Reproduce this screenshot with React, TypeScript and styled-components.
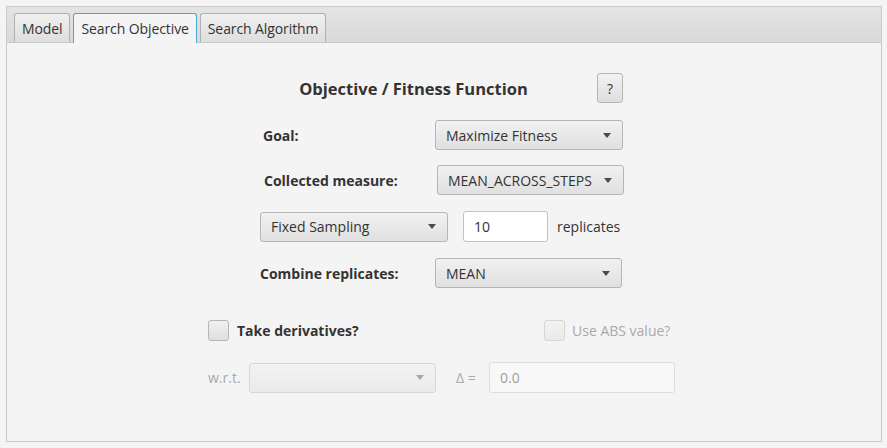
import React from "react";
import styled, { createGlobalStyle, css } from "styled-components";

const GlobalStyle = createGlobalStyle`
  html, body { margin: 0; padding: 0; background: #f4f4f4; }
  body {
    font-family: "Open Sans", "Noto Sans", "Liberation Sans", sans-serif;
    font-size: 14px;
    color: #333333;
  }
  * { box-sizing: border-box; }
`;

const Page = styled.div`
  width: 887px;
  height: 448px;
  padding: 6px 5px 6px 6px;
  display: flex;
`;

const TabPane = styled.div`
  flex: 1;
  display: flex;
  flex-direction: column;
`;

const TabHeader = styled.div`
  height: 36px;
  display: flex;
  align-items: flex-end;
  gap: 3px;
  padding-left: 7px;
  background: linear-gradient(#e4e4e4, #d9d9d9);
  border: 1px solid #c9c9c9;
  border-bottom: none;
`;

const Tab = styled.div<{ $active?: boolean }>`
  height: 29px;
  padding: 0 7px;
  display: flex;
  align-items: center;
  border-radius: 3px 3px 0 0;
  border: 1px solid #b0b0b0;
  border-bottom: none;
  background: linear-gradient(#f0f0f0, #dedede);
  color: #333;
  letter-spacing: -0.1px;
  ${(p) =>
    p.$active &&
    css`
      background: #f4f4f4;
      border-color: #45a8d8;
      position: relative;
      top: 1px;
      height: 30px;
    `}
`;

const Content = styled.div`
  flex: 1;
  background: #f4f4f4;
  border: 1px solid #c9c9c9;
  padding-left: 201px;
  display: flex;
  flex-direction: column;
`;

const Row = styled.div<{ $top: number; $left?: number }>`
  display: flex;
  align-items: center;
  margin-top: ${(p) => p.$top}px;
  margin-left: ${(p) => p.$left ?? 0}px;
`;

const Title = styled.div`
  width: 367px;
  text-align: center;
  font-weight: 700;
  font-size: 16.5px;
`;

const HelpButton = styled.div`
  width: 26px;
  height: 30px;
  border: 1px solid #b5b5b5;
  border-radius: 3px;
  background: linear-gradient(#f2f2f2, #dedede);
  display: flex;
  align-items: center;
  justify-content: center;
  font-size: 14px;
`;

const Label = styled.div<{ $width?: number; $disabled?: boolean; $bold?: boolean }>`
  width: ${(p) => (p.$width ? `${p.$width}px` : "auto")};
  font-weight: ${(p) => (p.$bold ? 700 : 400)};
  color: ${(p) => (p.$disabled ? "#a9a9a9" : "#333")};
  white-space: nowrap;
`;

const Combo = styled.div<{ $width: number; $disabled?: boolean }>`
  width: ${(p) => p.$width}px;
  height: 30px;
  border: 1px solid #b5b5b5;
  border-radius: 3px;
  background: linear-gradient(#f1f1f1, #e0e0e0);
  display: flex;
  align-items: center;
  justify-content: space-between;
  padding: 0 11px 0 10px;
  ${(p) =>
    p.$disabled &&
    css`
      opacity: 0.45;
    `}
`;

const Arrow = styled.span`
  width: 0;
  height: 0;
  border-left: 4.5px solid transparent;
  border-right: 4.5px solid transparent;
  border-top: 5px solid #4a4a4a;
`;

const TextField = styled.div<{ $width: number; $disabled?: boolean }>`
  width: ${(p) => p.$width}px;
  height: 31px;
  border: 1px solid #c2c2c2;
  border-radius: 3px;
  background: #fff;
  display: flex;
  align-items: center;
  padding: 0 10px;
  ${(p) =>
    p.$disabled &&
    css`
      opacity: 0.45;
    `}
`;

const CheckBox = styled.div<{ $disabled?: boolean }>`
  width: 21px;
  height: 21px;
  border: 1px solid #b5b5b5;
  border-radius: 3px;
  background: linear-gradient(#f1f1f1, #dfdfdf);
  ${(p) =>
    p.$disabled &&
    css`
      opacity: 0.45;
    `}
`;

const Spacer = styled.div<{ $w: number }>`
  width: ${(p) => p.$w}px;
  flex: none;
`;

export default function App() {
  return (
    <>
      <GlobalStyle />
      <Page>
        <TabPane>
          <TabHeader>
            <Tab>Model</Tab>
            <Tab $active>Search Objective</Tab>
            <Tab>Search Algorithm</Tab>
          </TabHeader>
          <Content>
            <Row $top={30} $left={22}>
              <Title>Objective / Fitness Function</Title>
              <HelpButton>?</HelpButton>
            </Row>
            <Row $top={17} $left={55}>
              <Label $bold $width={172}>Goal:</Label>
              <Combo $width={188}>
                <span>Maximize Fitness</span>
                <Arrow />
              </Combo>
            </Row>
            <Row $top={15} $left={56}>
              <Label $bold $width={173}>Collected measure:</Label>
              <Combo $width={187}>
                <span>MEAN_ACROSS_STEPS</span>
                <Arrow />
              </Combo>
            </Row>
            <Row $top={16} $left={52}>
              <Combo $width={188}>
                <span>Fixed Sampling</span>
                <Arrow />
              </Combo>
              <Spacer $w={15} />
              <TextField $width={85}>10</TextField>
              <Spacer $w={9} />
              <Label>replicates</Label>
            </Row>
            <Row $top={16} $left={52}>
              <Label $bold $width={175}>Combine replicates:</Label>
              <Combo $width={187}>
                <span>MEAN</span>
                <Arrow />
              </Combo>
            </Row>
            <Row $top={32} $left={0}>
              <CheckBox />
              <Spacer $w={8} />
              <Label $bold $width={307}>Take derivatives?</Label>
              <CheckBox $disabled />
              <Spacer $w={7} />
              <Label $disabled>Use ABS value?</Label>
            </Row>
            <Row $top={21} $left={0}>
              <Label $disabled $width={41}>w.r.t.</Label>
              <Combo $width={187} $disabled>
                <span />
                <Arrow />
              </Combo>
              <Spacer $w={20} />
              <Label $disabled $width={33}>Δ =</Label>
              <TextField $width={186} $disabled>0.0</TextField>
            </Row>
          </Content>
        </TabPane>
      </Page>
    </>
  );
}
